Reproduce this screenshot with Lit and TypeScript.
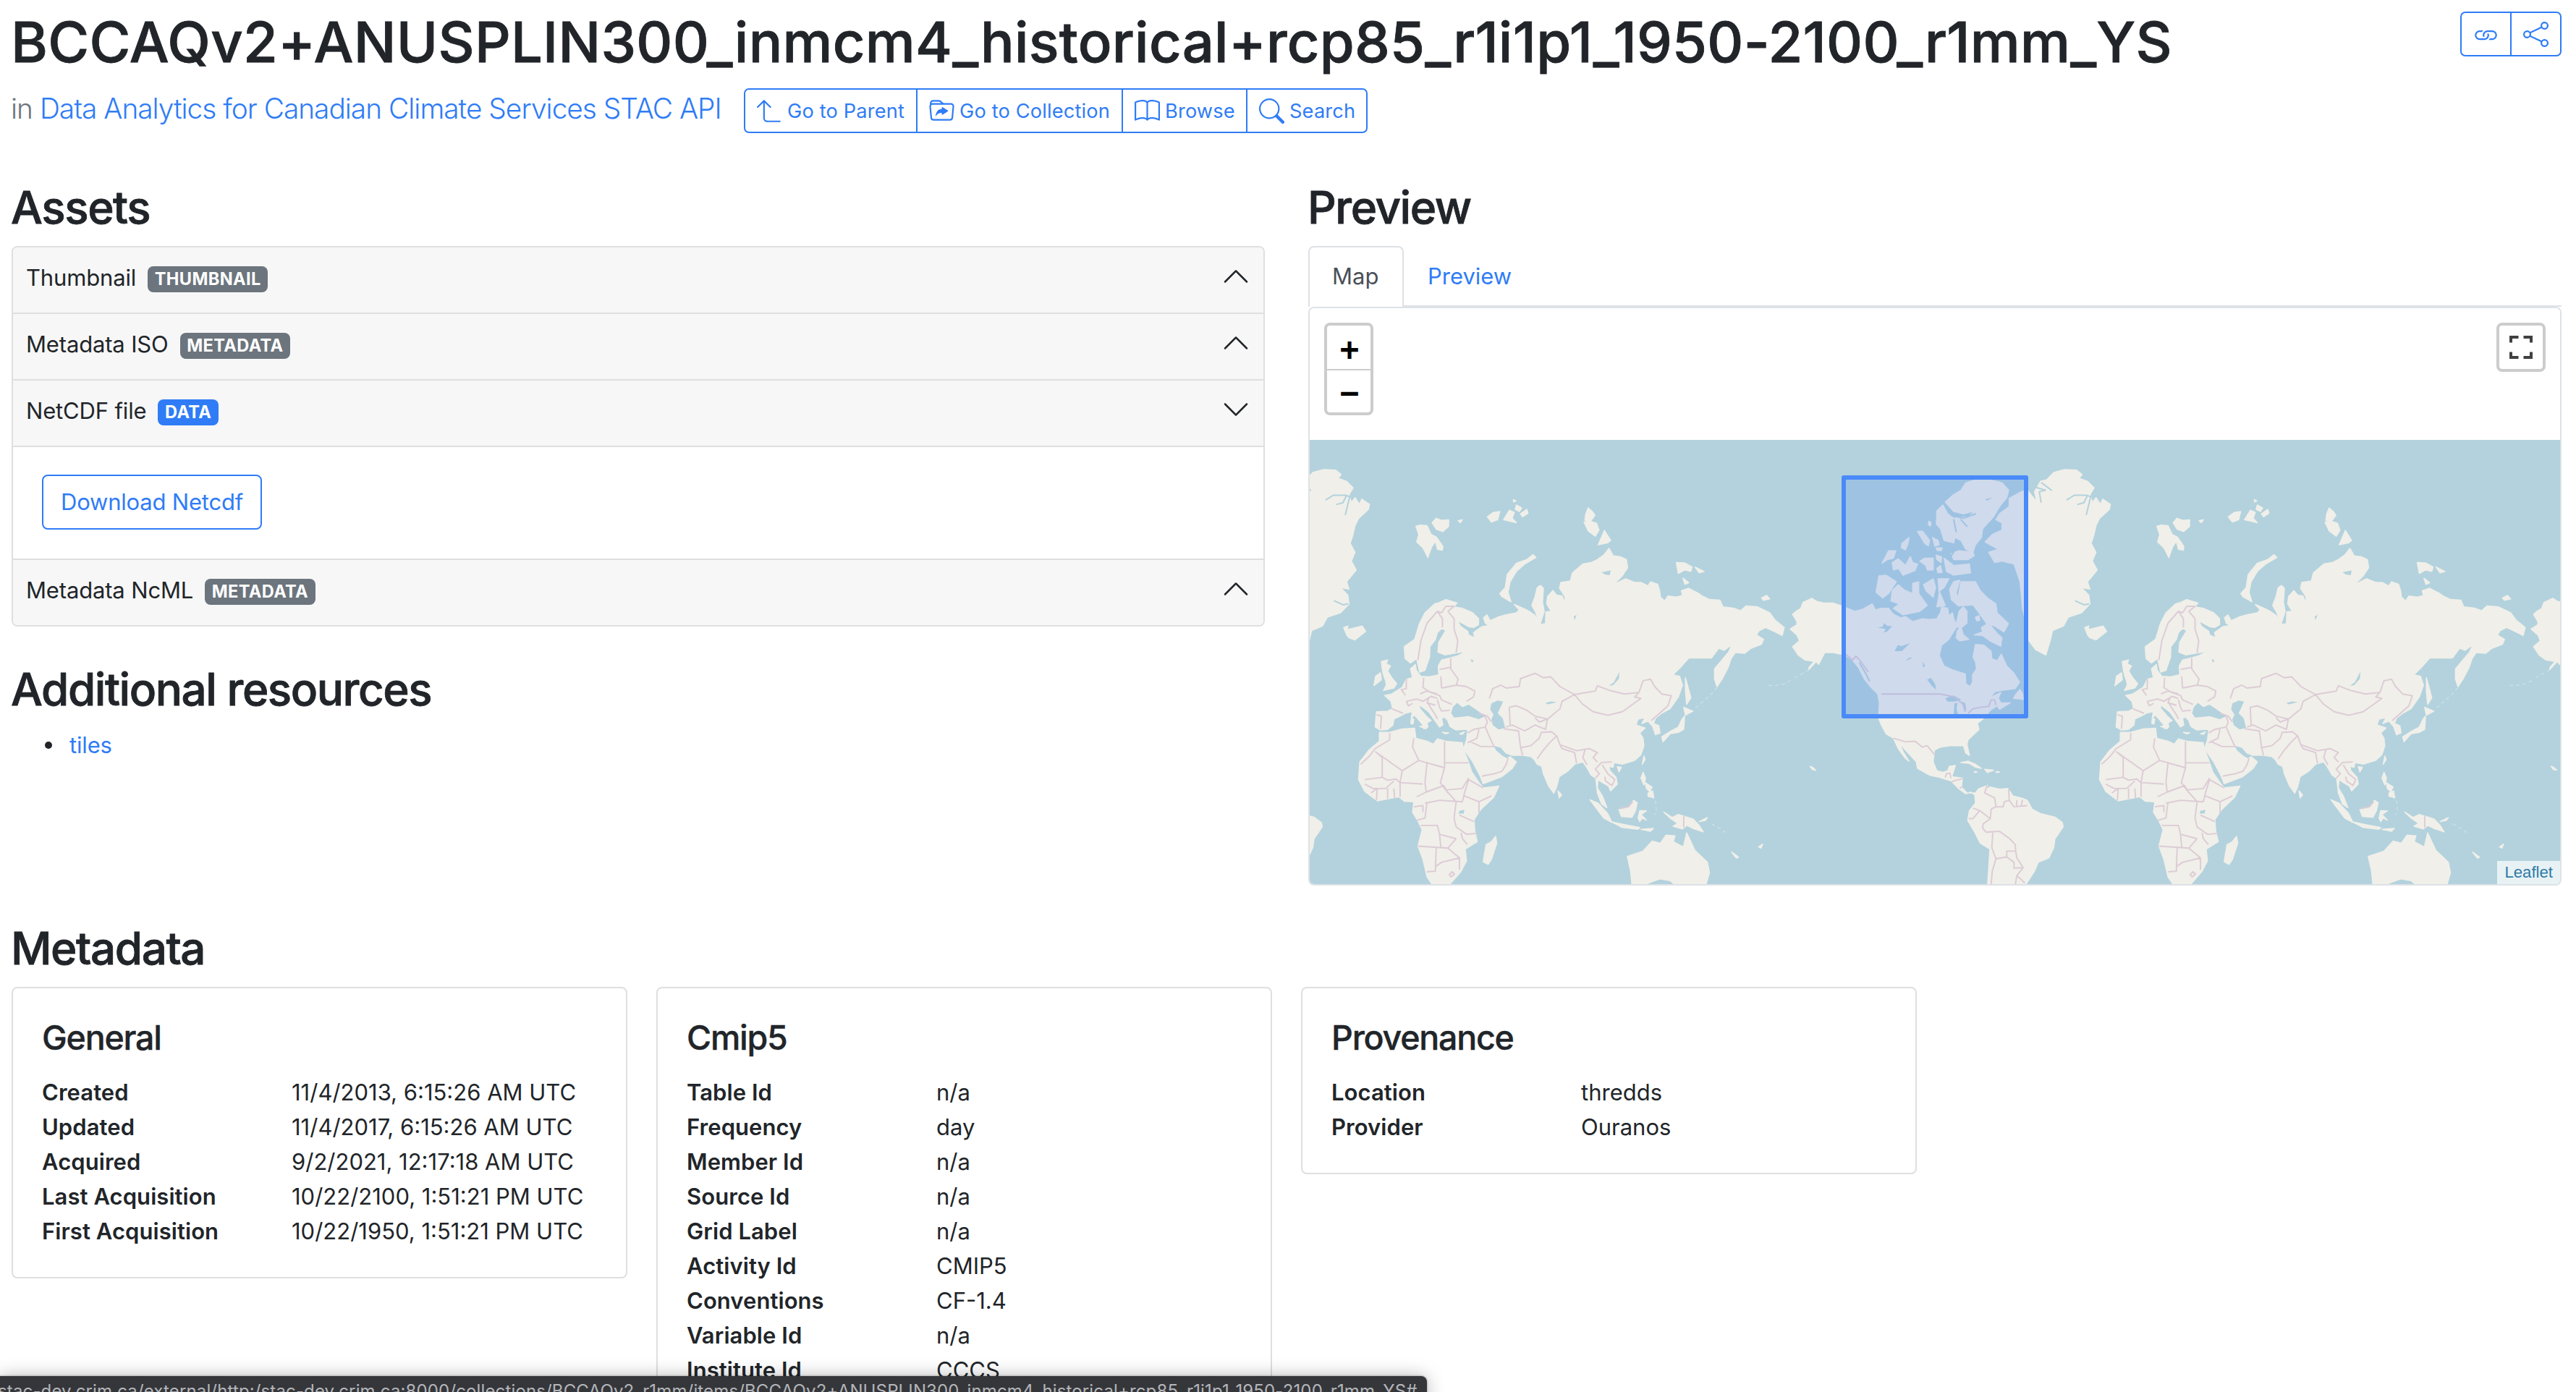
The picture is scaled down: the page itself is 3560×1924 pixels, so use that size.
import { LitElement, html, svg, css } from "lit";
import { customElement, property } from "lit/decorators.js";
import { classMap } from "lit/directives/class-map.js";

/* ---------- icons, 16 x 16 grid ---------- */

const ICONS: Record<string, string[]> = {
  parent: [
    "M4.854 1.146a.5.5 0 0 0-.708 0l-4 4a.5.5 0 1 0 .708.708L4 2.707V12.5A2.5 2.5 0 0 0 6.5 15h8a.5.5 0 0 0 0-1h-8A1.5 1.5 0 0 1 5 12.5V2.707l3.146 3.147a.5.5 0 1 0 .708-.708l-4-4z",
  ],
  collection: [
    "m11.798 8.271-3.182 1.97c-.27.166-.616-.036-.616-.372V9.1s-2.571-.3-4 2.4c.571-4.8 3.143-4.8 4-4.8v-.769c0-.336.346-.538.616-.371l3.182 1.969c.27.166.27.576 0 .742z",
    "m.5 3 .04.87a2 2 0 0 0-.342 1.311l.637 7A2 2 0 0 0 2.826 14h10.348a2 2 0 0 0 1.991-1.819l.637-7A2 2 0 0 0 13.81 3H9.828a2 2 0 0 1-1.414-.586l-.828-.828A2 2 0 0 0 6.172 1H2.5a2 2 0 0 0-2 2zm.694 2.09A1 1 0 0 1 2.19 4h11.62a1 1 0 0 1 .996 1.09l-.636 7a1 1 0 0 1-.996.91H2.826a1 1 0 0 1-.995-.91l-.637-7zM6.172 2a1 1 0 0 1 .707.293L7.586 3H2.19c-.24 0-.47.042-.683.12L1.5 2.98a1 1 0 0 1 1-.98h3.672z",
  ],
  browse: [
    "M1 2.828c.885-.37 2.154-.769 3.388-.893 1.33-.134 2.458.063 3.112.752v9.746c-.935-.53-2.12-.603-3.213-.493-1.18.12-2.37.461-3.287.811V2.828zm7.5-.141c.654-.689 1.782-.886 3.112-.752 1.234.124 2.503.523 3.388.893v9.923c-.918-.35-2.107-.692-3.287-.81-1.094-.111-2.278-.039-3.213.492V2.687zM8 1.783C7.015.936 5.587.81 4.287.94c-1.514.153-3.042.672-3.994 1.105A.5.5 0 0 0 0 2.5v11a.5.5 0 0 0 .707.455c.882-.4 2.303-.881 3.68-1.02 1.409-.142 2.59.087 3.223.877a.5.5 0 0 0 .78 0c.633-.79 1.814-1.019 3.222-.877 1.378.139 2.8.62 3.681 1.02A.5.5 0 0 0 16 13.5v-11a.5.5 0 0 0-.293-.455c-.952-.433-2.48-.952-3.994-1.105C10.413.809 8.985.936 8 1.783z",
  ],
  search: [
    "M11.742 10.344a6.5 6.5 0 1 0-1.397 1.398h-.001c.03.04.062.078.098.115l3.85 3.85a1 1 0 0 0 1.415-1.414l-3.85-3.85a1.007 1.007 0 0 0-.115-.1zM12 6.5a5.5 5.5 0 1 1-11 0 5.5 5.5 0 0 1 11 0z",
  ],
  link: [
    "M6.354 5.5H4a3 3 0 0 0 0 6h3a3 3 0 0 0 2.83-4H9c-.086 0-.17.01-.25.031A2 2 0 0 1 7 10.5H4a2 2 0 1 1 0-4h1.535c.218-.376.495-.714.82-1z",
    "M9 5.5a3 3 0 0 0-2.83 4h1.098A2 2 0 0 1 9 6.5h3a2 2 0 1 1 0 4h-1.535a4.02 4.02 0 0 1-.82 1H12a3 3 0 1 0 0-6H9z",
  ],
  share: [
    "M13.5 1a1.5 1.5 0 1 0 0 3 1.5 1.5 0 0 0 0-3zM11 2.5a2.5 2.5 0 1 1 .603 1.628l-6.718 3.12a2.499 2.499 0 0 1 0 1.504l6.718 3.12a2.5 2.5 0 1 1-.488.876l-6.718-3.12a2.5 2.5 0 1 1 0-3.256l6.718-3.12A2.5 2.5 0 0 1 11 2.5zm-8.5 4a1.5 1.5 0 1 0 0 3 1.5 1.5 0 0 0 0-3zm11 5.5a1.5 1.5 0 1 0 0 3 1.5 1.5 0 0 0 0-3z",
  ],
  up: [
    "M7.646 4.646a.5.5 0 0 1 .708 0l6 6a.5.5 0 0 1-.708.708L8 5.707l-5.646 5.647a.5.5 0 0 1-.708-.708l6-6z",
  ],
  down: [
    "M1.646 4.646a.5.5 0 0 1 .708 0L8 10.293l5.646-5.647a.5.5 0 0 1 .708.708l-6 6a.5.5 0 0 1-.708 0l-6-6a.5.5 0 0 1 0-.708z",
  ],
};

const icon = (name: string, cls = "icon") =>
  html`<svg class=${cls} viewBox="0 0 16 16" fill="currentColor">
    ${ICONS[name].map((d) => svg`<path d=${d}></path>`)}
  </svg>`;

/* ---------- world map shapes ---------- */

/* Europe, Asia, Africa and Oceania. */
const EAST_LAND = [
  "318,575 330,570 345,560 358,566 372,572 364,585 385,590 410,605 424,625 424,645 412,655 400,652 385,640 374,632 380,650 398,668 400,680 415,690 412,672 432,652 448,648 440,640 436,622 444,612 452,632 470,620 490,612 515,605 522,595 510,577 535,592 548,602 560,614 570,640 562,605 552,580 560,550 565,520 573,512 580,522 578,570 582,600 572,645 585,642 586,602 596,600 603,628 598,598 588,575 590,550 603,530 612,545 625,548 633,575 632,550 619,522 622,502 645,497 650,470 675,440 695,435 710,425 725,410 738,387 748,412 765,415 780,425 783,452 770,480 748,510 778,490 800,502 815,502 832,514 838,500 855,508 860,530 862,552 872,565 880,548 900,552 915,547 912,530 930,522 952,538 962,548 980,560 1005,562 1012,585 1040,590 1055,598 1068,582 1095,585 1125,605 1138,630 1160,655 1155,682 1135,668 1115,655 1100,665 1093,680 1110,695 1105,712 1080,725 1065,742 1042,740 1032,760 1025,790 1010,830 998,855 992,830 992,795 1010,765 1025,740 1035,712 1015,732 1002,725 985,758 930,758 910,790 892,815 908,820 915,850 905,890 885,930 865,945 850,962 845,980 858,987 861,1012 850,1018 843,990 832,972 817,980 825,960 808,965 803,985 825,995 812,1012 820,1030 822,1055 815,1085 800,1105 770,1118 750,1112 748,1128 738,1125 740,1140 755,1162 758,1185 742,1208 737,1192 722,1180 712,1170 710,1198 722,1225 733,1265 720,1252 710,1215 706,1165 695,1155 685,1130 675,1110 655,1118 640,1140 618,1160 612,1195 605,1216 592,1190 580,1150 576,1125 565,1118 558,1102 550,1092 530,1088 505,1088 490,1080 478,1060 458,1053 465,1072 482,1092 492,1100 500,1092 515,1110 505,1132 480,1160 435,1184 428,1158 410,1110 388,1065 395,1035 398,1000 385,1000 370,1002 355,990 350,970 342,958 335,962 338,985 330,992 318,968 305,942 290,925 280,915 283,930 298,955 310,970 300,978 302,992 292,998 290,985 275,960 262,940 248,945 235,955 220,965 218,985 205,1000 188,1002 175,992 178,940 205,938 217,930 213,905 198,885 215,880 228,868 240,858 250,830 265,825 260,795 272,780 274,800 285,820 305,822 328,815 327,785 335,765 355,758 375,750 395,735 375,740 343,748 326,738 328,705 345,665 335,658 325,672 320,695 307,720 306,755 295,800 282,806 275,760 260,775 247,760 245,720 270,695 282,640 295,605",
  "185,1010 210,1010 240,998 270,996 273,1030 300,1040 315,1050 325,1032 345,1040 385,1045 387,1065 397,1100 408,1145 425,1180 435,1198 473,1192 460,1230 430,1270 413,1305 415,1345 421,1380 392,1405 395,1445 382,1480 355,1524 312,1524 300,1500 290,1440 278,1395 288,1340 278,1310 265,1280 268,1245 245,1243 232,1228 180,1242 150,1210 135,1170 138,1110 160,1070 185,1040",
  "465,1362 468,1385 455,1440 447,1457 435,1448 442,1390 455,1380",
  "782,1430 820,1412 842,1378 862,1385 875,1358 897,1360 893,1380 917,1398 925,1350 935,1380 945,1410 975,1450 980,1485 972,1524 895,1524 885,1512 860,1506 830,1522 793,1524 790,1480",
  "762,1272 785,1265 797,1240 806,1248 802,1275 793,1298 768,1295",
  "692,1238 712,1250 735,1285 745,1315 725,1300 708,1268",
  "745,1313 775,1322 812,1332 808,1338 770,1332",
  "815,1338 845,1335 838,1345",
  "812,1275 828,1276 815,1288 828,1307 818,1300 812,1312 808,1300",
  "870,1280 890,1298 905,1288 940,1303 955,1325 965,1347 940,1335 925,1325 915,1337 892,1328 903,1318 885,1300",
  "955,1312 975,1298 970,1308",
  "820,1145 826,1165 822,1188 815,1165",
  "825,1180 842,1195 836,1210 828,1200",
  "832,1215 843,1208 846,1232 832,1226",
  "615,1208 624,1222 618,1232",
  "822,1090 825,1102 818,1118",
  "758,1126 768,1128 762,1144",
  "920,955 918,1000 905,1010 885,1015 868,1042 865,1025 888,1005 905,992 914,965",
  "918,925 940,938 922,952",
  "922,825 930,865 935,893 925,915 922,870",
  "555,408 562,418 535,440 515,465 500,500 495,535 502,568 480,550 475,540 488,520 493,475 515,437 540,425",
  "273,312 283,308 300,310 310,340 322,348 338,380 337,393 325,390 320,362 310,385 302,418 290,385 275,365 280,340",
  "312,300 322,285 335,292 352,290 352,312 338,330 322,322",
  "445,280 460,265 475,262 470,290 455,298",
  "484,290 498,258 510,265 505,285 515,300",
  "515,240 528,250 522,262 512,255",
  "525,270 540,255 543,268 530,280",
  "508,222 514,226 508,230",
  "375,293 385,290 380,300",
  "688,250 698,262 704,275 695,292 680,292 682,270",
  "678,298 690,294 708,302 714,325 705,346 688,328",
  "727,326 742,360 735,368 712,375",
  "900,435 920,436 938,450 935,465 920,460 905,472",
  "945,450 967,465 955,470",
  "916,488 930,503 921,509",
  "1105,555 1117,546 1125,558 1110,563",
  "190,770 205,765 202,778 212,785 205,802 215,825 227,845 220,860 195,868 202,850 200,835 195,815 192,795",
  "176,820 188,808 190,832 172,852",
  "264,945 267,955 262,960",
  "262,962 268,965 266,982 261,980",
  "282,990 300,984 298,998",
  "337,1010 352,1012 345,1015",
  "378,1015 390,1008 385,1017",
  "1222,1125 1228,1128 1236,1138 1228,1136",
  "1033,1415 1050,1432 1045,1436",
  "1098,1398 1108,1388 1104,1402",
];

/* North and South America with Greenland. */
const WEST_LAND = [
  "-68,610 -50,598 -34,590 -25,570 12,556 30,566 60,572 100,572 136,582 190,600 225,592 262,575 275,595 300,590 330,590 350,610 380,622 400,618 430,635 470,625 500,628 530,625 545,605 550,585 575,590 580,615 595,605 602,630 615,650 600,668 580,695 550,715 540,750 560,785 600,800 648,812 650,845 668,855 678,840 678,815 695,795 690,770 680,755 690,712 725,715 755,735 758,760 780,768 797,745 820,785 850,810 873,840 855,862 800,868 770,872 750,895 770,885 795,875 785,895 795,910 835,910 790,932 780,920 752,935 720,965 698,980 705,1000 660,1035 655,1050 665,1088 650,1080 640,1055 585,1055 545,1060 520,1070 515,1110 530,1140 555,1145 575,1140 582,1125 607,1122 600,1140 592,1160 636,1165 632,1195 655,1215 690,1215 688,1222 670,1212 650,1218 620,1200 590,1175 540,1162 500,1155 450,1132 445,1110 400,1070 375,1045 390,1075 415,1108 400,1098 370,1065 350,1030 320,1015 300,985 288,960 292,910 285,880 260,860 230,830 205,790 180,765 150,748 100,740 65,740 40,780 30,770 0,797 0,790 22,770 -16,765 -45,748 -68,720 -40,700 -50,680 -78,660 -50,645 -50,635",
  "688,1225 690,1215 705,1200 740,1190 735,1205 750,1195 790,1202 825,1200 845,1225 880,1232 905,1240 925,1270 960,1285 1020,1297 1050,1315 1054,1330 1020,1370 1015,1400 995,1435 950,1450 935,1480 895,1530 740,1530 745,1470 750,1405 710,1385 685,1345 658,1308 665,1275 690,1250",
  "630,1112 660,1107 690,1118 715,1132 690,1128 665,1115",
  "728,1135 765,1138 740,1146",
  "685,1143 697,1144 690,1146",
  "775,1143 790,1144 780,1146",
  "875,865 885,878 888,898 848,895 860,878",
  "1015,130 1060,120 1110,122 1132,137 1120,150 1155,160 1182,182 1165,205 1175,232 1190,215 1208,238 1218,220 1250,238 1245,255 1205,285 1190,310 1180,345 1170,370 1190,400 1175,430 1195,460 1175,480 1155,500 1165,525 1130,520 1160,545 1165,575 1130,605 1075,620 1055,650 1010,665 1000,700 982,748 940,730 912,700 900,640 885,590 880,540 875,500 850,440 800,430 770,435 745,400 785,390 730,365 760,340 800,325 800,300 775,290 790,270 830,245 830,218 880,195 905,190 930,215 945,230 935,195 960,160 985,155",
  "565,230 600,205 630,190 650,165 690,155 750,155 800,165 828,190 820,215 790,245 765,280 720,320 715,350 690,375 680,400 650,390 630,360 605,350 600,368 560,360 545,320 528,305 530,260 555,240 575,270 600,285 660,280 690,260 640,270 600,262",
  "590,405 620,395 680,400 685,412 660,425 600,425",
  "560,420 600,445 665,440 670,470 600,478 570,465",
  "600,500 625,495 610,540 618,552 630,500 690,500 710,530 740,555 775,575 780,605 827,642 808,670 770,650 735,640 700,600 680,578 620,582 590,560 583,525",
  "685,680 720,670 715,655 745,640 780,675 800,690 795,718 750,700 720,682",
  "615,665 632,658 640,680 662,695 625,700 610,690",
  "622,600 640,585 655,600 655,640 625,660 610,645",
  "690,620 705,615 708,630 695,632",
  "345,530 370,510 395,528 430,540 430,505 455,500 455,540 490,580 460,600 390,612 350,590 375,575 340,565",
  "290,480 320,478 362,500 330,540 305,555 278,535",
  "475,510 515,490 525,520 515,552 485,530",
  "535,490 580,490 560,520 540,532 565,580 530,585 540,540",
  "345,435 370,422 400,445 420,415 430,435 450,440 440,462 390,478 372,455 350,460",
  "303,437 330,395 360,395 350,420 325,425",
  "450,330 470,328 500,360 495,378 480,370",
  "385,370 415,350 410,372 400,392 383,385",
  "460,430 480,420 515,420 515,460 490,460 485,445",
  "527,410 550,415 548,435 530,425",
  "530,455 545,445 552,468 535,470",
  "512,350 535,360 540,375 522,380",
  "497,295 506,300 503,312 495,306",
  "528,385 552,385 548,395 530,393",
  "1143,655 1160,650 1158,662 1180,658 1220,650 1234,668 1190,697 1165,690 1155,680",
];

/* Aleutian chain, Kurils and small Pacific islands, drawn as faint strokes. */
const WEST_CHAINS = ["0,797 -30,812 -58,825", "-75,835 -110,848 -150,852 -175,850"];
const EAST_CHAINS = ["998,858 985,880 965,905 942,932", "748,1318 780,1328 812,1336", "985,1320 1005,1335 1020,1350", "850,1240 852,1275 848,1290"];

const EAST_WATER = [
  "362,925 372,910 385,925 400,916 415,930 425,940 440,955 425,965 400,955 365,960 358,945",
  "455,912 470,902 483,906 475,930 470,945 482,962 488,995 472,1000 458,985 455,965 460,950 452,932",
  "738,852 750,840 763,805 762,828 748,850",
  "378,1276 390,1272 388,1285 376,1285",
  "720,468 742,462 740,478 728,475",
  "585,910 600,905 612,908 590,915",
  "405,762 412,766 408,774",
  "653,618 660,612 655,630",
];

const WEST_WATER = [
  "285,655 305,652 312,640 325,650 345,650 325,668 310,672 318,660",
  "355,735 368,715 385,718 418,708 385,735",
  "402,768 412,758 432,756",
  "490,832 505,825 522,845 528,865 512,855",
  "470,770 482,785 474,790",
  "565,895 600,885 632,900 600,906 575,906",
  "603,912 615,910 612,930 618,948 600,950",
  "632,905 648,912 652,935 645,940",
  "728,222 760,215 740,225",
  "680,700 686,702 680,706",
];

/* Fjords cut into the coast of Greenland and Ellesmere. */
const WEST_FJORDS = [
  "1070,222 1100,207 1150,207 1168,212 1150,272",
  "1115,238 1140,232 1152,212",
  "940,180 980,190 955,195 962,230",
  "590,275 640,285 690,270",
  "600,290 610,330",
  "630,290 655,312",
  "965,165 1005,190",
  "1105,565 1140,578 1160,575",
  "210,775 235,810 250,835",
  "545,410 585,418 600,400",
];

const EAST_BORDERS = [
  "278,765 285,700 300,640 325,600 335,605 345,583 365,583 350,600",
  "325,600 337,625 337,655",
  "350,600 365,625 365,660 374,700 370,740",
  "450,895 458,862 478,850 490,860 522,855 525,828 560,810 580,825 598,822 620,855 655,882 625,905 620,930 590,965 560,955 540,935 515,920 498,925 500,985",
  "655,882 705,870 710,852 740,868 775,880 810,875 800,890 815,895 770,940 735,952 700,940 675,915 655,882",
  "810,875 820,835 838,830 848,855 865,880 888,886 880,920 860,945 840,970",
  "490,992 505,985 535,1005 560,985 585,1000 590,965 570,975 560,960",
  "485,998 520,1005 525,1060 530,1088",
  "525,1062 550,1055 570,1030 575,1010 600,1008 612,1022 595,1045 580,1070 565,1100",
  "612,1022 620,1052 660,1072 690,1065 710,1078 700,1095 710,1110",
  "620,1052 625,1065 655,1078 660,1115",
  "680,1070 675,1095 685,1120",
  "705,1165 715,1150 705,1135 720,1112 745,1110",
  "722,1120 735,1150 752,1170 745,1190 730,1175 728,1160",
  "330,797 355,790",
  "357,758 357,795 375,830 370,850",
  "292,825 290,858 305,872 325,880",
  "333,820 335,860",
  "335,860 370,850 395,855 415,870 412,890 395,905",
  "250,828 250,862 238,865 248,885",
  "250,905 275,897 290,905 310,888 325,895",
  "250,905 255,920 265,912",
  "215,930 242,945",
  "178,950 190,955 188,998",
  "283,880 300,870 330,885 335,900 360,915",
  "300,905 310,930 320,950 325,965",
  "325,900 330,925 335,938 355,935",
  "305,890 300,910 320,918",
  "398,1012 412,1000 440,992",
  "425,1000 420,1030 398,1045",
  "438,950 445,975 440,992 455,1040 462,1060",
  "405,1042 430,1058 460,1058",
  "425,945 445,955 455,975",
  "432,1158 462,1150 480,1142 490,1120 495,1098",
  "210,1012 210,1035 175,1065 160,1092 140,1118",
  "175,1075 240,1140 280,1105 265,1060 268,1030",
  "178,1078 192,1095 192,1162 150,1170",
  "280,1105 342,1130 342,1040",
  "342,1113 400,1113",
  "342,1130 332,1180 345,1205 385,1200 400,1165",
  "300,1110 295,1180 298,1212 275,1228",
  "240,1140 235,1180 290,1185",
  "235,1180 235,1228",
  "192,1162 205,1172 225,1168 235,1180",
  "150,1185 170,1200 200,1200 220,1175",
  "205,1200 205,1235",
  "220,1200 222,1235",
  "165,1215 180,1200 178,1240",
  "298,1212 340,1190 350,1215",
  "295,1250 330,1240 385,1245",
  "345,1205 370,1245 365,1300 370,1330 395,1355 420,1352",
  "385,1245 390,1215 400,1170 435,1198",
  "390,1225 425,1245 455,1225",
  "425,1245 425,1285",
  "378,1290 413,1312",
  "275,1308 295,1300 300,1245",
  "268,1262 290,1258 290,1280",
  "285,1325 325,1325 330,1355 370,1370",
  "278,1395 350,1402 370,1370",
  "330,1355 333,1398",
  "322,1400 320,1480 300,1482",
  "350,1402 378,1435 335,1450 320,1465",
  "378,1435 378,1475",
  "382,1350 385,1370 397,1390",
  "353,1492 360,1482 366,1490 358,1499 353,1492",
  "765,1268 785,1262 795,1245",
  "918,1293 918,1332",
];

const WEST_BORDERS = [
  "300,880 545,880 600,890 640,915 648,940",
  "660,945 680,930 710,925 745,922 755,900 770,900 775,918",
  "152,745 180,765 195,752 215,770 245,805",
  "350,1030 400,1042 440,1040 470,1060 490,1055 520,1085",
  "565,1162 570,1150 585,1148 588,1165",
  "590,1178 610,1172 636,1167",
  "625,1198 635,1195",
  "738,1190 728,1215 770,1232 775,1262 755,1270 752,1302",
  "680,1267 708,1275 752,1302 722,1320 720,1335 735,1348 790,1345 832,1370 855,1390 857,1412 820,1412 820,1430",
  "708,1275 680,1302 662,1302",
  "762,1350 758,1400 775,1438 760,1480 755,1525",
  "775,1438 820,1432 850,1450 850,1470 888,1468",
  "857,1412 862,1435 888,1468 862,1495 895,1520",
  "828,1202 830,1240 810,1245 805,1262 775,1262",
  "830,1240 850,1262 905,1258",
  "862,1240 860,1260",
  "885,1238 880,1258",
  "862,1495 855,1525",
];

const toPath = (shapes: string[], close: boolean) =>
  shapes.map((points) => "M" + points.split(" ").join("L") + (close ? "Z" : "")).join("");

const PATHS = {
  eastLand: toPath(EAST_LAND, true),
  eastChains: toPath(EAST_CHAINS, false),
  eastWater: toPath(EAST_WATER, true),
  eastBorders: toPath(EAST_BORDERS, false),
  westLand: toPath(WEST_LAND, true),
  westChains: toPath(WEST_CHAINS, false),
  westWater: toPath(WEST_WATER, true),
  westFjords: toPath(WEST_FJORDS, false),
  westBorders: toPath(WEST_BORDERS, false),
};

/* One world is 1024 units wide at this zoom level. */
const WORLD = 1024;

@customElement("leaflet-map")
export class LeafletMap extends LitElement {
  static styles = css`
    :host { display: block; position: relative; overflow: hidden; height: 796px; padding-top: 182px; box-sizing: border-box; background: #fff; }
    .tiles { display: block; width: 1728px; height: 614px; }
    .sea { fill: #b3d2dd; }
    .land { fill: #f0efe9; stroke: #f0efe9; stroke-width: 1.5; stroke-linejoin: round; }
    .chain { fill: none; stroke: #f0efe9; stroke-width: 1.3; stroke-opacity: 0.45; stroke-dasharray: 5 4; }
    .water { fill: #b3d2dd; }
    .fjord { fill: none; stroke: #b3d2dd; stroke-width: 2; stroke-linecap: round; stroke-linejoin: round; }
    .border { fill: none; stroke: #dccbd6; stroke-width: 1.9; stroke-linejoin: round; }
    .bbox { fill: #4a87fb; fill-opacity: 0.2; stroke: #4a8af8; stroke-width: 6; stroke-linejoin: round; }
    .thin { vector-effect: non-scaling-stroke; }
    .control { position: absolute; box-sizing: border-box; border: 4px solid #ccc; border-radius: 8px; background: #fff; display: flex; flex-direction: column; }
    .zoom { left: 20px; top: 20px; width: 68px; height: 128px; }
    .zoom button { all: unset; box-sizing: border-box; height: 60px; display: flex; align-items: center; justify-content: center; padding: 5px 0 0 2px; font: 700 44px/54px "DejaVu Sans Mono", monospace; color: #000; }
    .zoom button + button { border-top: 2px solid #ccc; padding-top: 3px; }
    .full { right: 20px; top: 20px; width: 68px; height: 68px; align-items: center; justify-content: center; }
    .full svg { width: 32px; height: 32px; fill: none; stroke: #404040; stroke-width: 4; }
    .credit { position: absolute; right: 0; bottom: 0; height: 32px; padding: 0 10px; background: rgba(255, 255, 255, 0.7); font: 22.2px/32px "Liberation Sans", sans-serif; color: #2f7ba6; }
  `;

  private world(offset: number) {
    return svg`<g transform="translate(${offset} 0)">
      <g transform="translate(-10 -8) scale(0.574 0.4082)">
        <path class="land thin" d=${PATHS.eastLand}></path>
        <path class="chain thin" d=${PATHS.eastChains}></path>
        <path class="water" d=${PATHS.eastWater}></path>
        <path class="border thin" d=${PATHS.eastBorders}></path>
      </g>
      <g transform="translate(690 -8) scale(0.33333 0.4082)">
        <path class="land thin" d=${PATHS.westLand}></path>
        <path class="chain thin" d=${PATHS.westChains}></path>
        <path class="water" d=${PATHS.westWater}></path>
        <path class="fjord thin" d=${PATHS.westFjords}></path>
        <path class="border thin" d=${PATHS.westBorders}></path>
      </g>
    </g>`;
  }

  render() {
    return html`
      <svg class="tiles" viewBox="0 0 1728 614">
        <rect class="sea" width="1728" height="614"></rect>
        ${[-WORLD, 0, WORLD].map((offset) => this.world(offset))}
        <rect class="bbox" x="738" y="52" width="252" height="330"></rect>
      </svg>
      <div class="control zoom"><button>+</button><button>−</button></div>
      <div class="control full">
        <svg viewBox="0 0 32 32"><path d="M2 9.500V2H12.500M19.500 2H30V9.500M30 22.500V30H19.500M12.500 30H2V22.500"></path></svg>
      </div>
      <div class="credit">Leaflet</div>
    `;
  }
}

@customElement("metadata-card")
export class MetadataCard extends LitElement {
  static styles = css`
    :host { display: block; box-sizing: border-box; border: 2px solid #dfdfdf; border-radius: 8px; padding: 40px 40px 39px; background: #fff; }
    .title { margin: 0 0 23px; font-size: 46.5px; font-weight: 500; -webkit-text-stroke: 0.4px #212529; line-height: 57px; letter-spacing: -0.026em; }
    .row { display: grid; grid-template-columns: 345px 1fr; font-size: 31px; line-height: 48px; white-space: nowrap; }
    .key { font-weight: 600; letter-spacing: 0.002em; }
  `;
  @property() heading = "";
  @property({ attribute: false }) rows: [string, string][] = [];

  render() {
    return html`<h4 class="title">${this.heading}</h4>
      ${this.rows.map(([key, value]) => html`<div class="row"><span class="key">${key}</span><span>${value}</span></div>`)}`;
  }
}

interface Asset { name: string; role: string; open?: boolean }

const ASSETS: Asset[] = [
  { name: "Thumbnail", role: "THUMBNAIL" },
  { name: "Metadata ISO", role: "METADATA" },
  { name: "NetCDF file", role: "DATA", open: true },
  { name: "Metadata NcML", role: "METADATA" },
];

const METADATA: { heading: string; rows: [string, string][] }[] = [
  {
    heading: "General",
    rows: [
      ["Created", "11/4/2013, 6:15:26 AM UTC"],
      ["Updated", "11/4/2017, 6:15:26 AM UTC"],
      ["Acquired", "9/2/2021, 12:17:18 AM UTC"],
      ["Last Acquisition", "10/22/2100, 1:51:21 PM UTC"],
      ["First Acquisition", "10/22/1950, 1:51:21 PM UTC"],
    ],
  },
  {
    heading: "Cmip5",
    rows: [
      ["Table Id", "n/a"],
      ["Frequency", "day"],
      ["Member Id", "n/a"],
      ["Source Id", "n/a"],
      ["Grid Label", "n/a"],
      ["Activity Id", "CMIP5"],
      ["Conventions", "CF-1.4"],
      ["Variable Id", "n/a"],
      ["Institute Id", "CCCS"],
    ],
  },
  { heading: "Provenance", rows: [["Location", "thredds"], ["Provider", "Ouranos"]] },
];

@customElement("app-root")
export class AppRoot extends LitElement {
  static styles = css`
    :host { display: block; position: relative; box-sizing: border-box; width: 3560px; height: 1924px; overflow: hidden; padding: 10px 20px 0 16px; background: #fff; color: #212529; font-family: Inter, "Liberation Sans", sans-serif; font-size: 31px; line-height: 48px; }
    a { color: #2f7cf6; text-decoration: none; }
    h1, h2 { margin: 0; font-weight: 500; -webkit-text-stroke: 0.8px #212529; white-space: nowrap; }
    h1 { font-size: 77.6px; line-height: 96px; letter-spacing: 0.0034em; text-indent: -1px; }
    h2 { font-size: 62px; line-height: 76px; letter-spacing: -0.0235em; text-indent: -1px; margin-bottom: 15px; }
    .header { display: flex; justify-content: space-between; align-items: flex-start; height: 174px; }
    .subtitle { display: flex; align-items: flex-start; margin-top: 16px; }
    .lead { font-size: 38.8px; font-weight: 300; line-height: 56px; letter-spacing: -0.0252em; color: #6c757d; white-space: nowrap; width: 1012px; text-indent: -1px; }
    .group { display: flex; height: 62px; box-sizing: border-box; border: 2px solid #2f7cf6; border-radius: 7px; color: #2f7cf6; }
    .nav { display: grid; grid-template-columns: 236px 284px 172px 166px; }
    .btn { display: flex; align-items: center; padding-left: 16px; font-size: 27.2px; letter-spacing: 0.006em; line-height: 34px; white-space: nowrap; box-sizing: border-box; }
    .btn + .btn { border-left: 2px solid #2f7cf6; }
    .label { padding: 2px 0 0 7px; }
    .icon { width: 35px; height: 35px; flex: none; }
    .tools { margin-top: 6px; }
    .tools .btn { padding-right: 16px; }
    .columns { display: grid; grid-template-columns: 1732px 1732px; gap: 60px; margin-top: 65px; height: 1024px; }
    .accordion { border: 2px solid #dfdfdf; border-radius: 8px; overflow: hidden; margin-bottom: 49px; }
    .asset { display: flex; align-items: flex-start; height: 90px; box-sizing: border-box; padding: 18px 0 0 18px; background: #f7f7f7; letter-spacing: -0.005em; }
    .asset:not(:first-child) { border-top: 2px solid #dfdfdf; height: 92px; }
    .badge { height: 36px; margin: 8px 0 0 16px; padding: 0 9.6px; border-radius: 8px; background: #6c757d; color: #fff; font-size: 23.6px; font-weight: 700; line-height: 36px; letter-spacing: 0.015em; }
    .badge.data { background: #2f7cf6; }
    .chevron { width: 40px; height: 40px; margin: 2px 18px 0 auto; }
    .panel { height: 156px; box-sizing: border-box; border-top: 2px solid #dfdfdf; padding: 38px 40px; }
    .download { width: 304px; height: 76px; box-sizing: border-box; border: 2px solid #2f7cf6; border-radius: 8px; color: #2f7cf6; display: flex; align-items: center; justify-content: center; letter-spacing: -0.0066em; }
    .links { list-style: none; margin: 0; padding: 0 0 0 46px; }
    .links li { display: flex; align-items: center; gap: 24px; letter-spacing: -0.005em; }
    .dot { width: 10px; height: 10px; border-radius: 50%; background: #212529; }
    .tabs { display: flex; height: 84px; box-sizing: border-box; border-bottom: 2px solid #dee2e6; }
    .tab { height: 84px; box-sizing: border-box; border: 2px solid transparent; border-bottom: 0; border-radius: 8px 8px 0 0; padding: 16px 30px 0 31px; color: #2f7cf6; letter-spacing: 0; }
    .tab.active { width: 132px; border-color: #dee2e6; background: #fff; color: #495057; }
    .map { border: 2px solid #dee2e6; border-radius: 8px; overflow: hidden; }
    .cards { display: grid; grid-template-columns: repeat(4, 851px); gap: 40px; align-items: start; }
    .tall { height: 700px; }
    .status { position: absolute; left: 0; top: 1902px; width: 1972px; height: 40px; box-sizing: border-box; padding-top: 5px; border-radius: 0 8px 0 0; background: #35363a; color: #b4b6ba; font-size: 24px; line-height: 32px; letter-spacing: 0.0058em; white-space: nowrap; text-indent: -3px; box-shadow: 0 0 24px rgba(0, 0, 0, 0.28), 0 0 0 1.500px rgba(0, 0, 0, 0.12); }
  `;

  private asset(asset: Asset) {
    return html`
      <div class="asset">
        <span>${asset.name}</span>
        <span class=${classMap({ badge: true, data: asset.role === "DATA" })}>${asset.role}</span>
        ${icon(asset.open ? "down" : "up", "chevron")}
      </div>
      ${asset.open ? html`<div class="panel"><div class="download">Download Netcdf</div></div>` : ""}
    `;
  }

  private button(name: string, label = "") {
    return html`<div class="btn">${icon(name)}${label ? html`<span class="label">${label}</span>` : ""}</div>`;
  }

  render() {
    return html`
      <header class="header">
        <div>
          <h1>BCCAQv2+ANUSPLIN300_inmcm4_historical+rcp85_r1i1p1_1950-2100_r1mm_YS</h1>
          <div class="subtitle">
            <div class="lead">in <a>Data Analytics for Canadian Climate Services STAC API</a></div>
            <div class="group nav">
              ${this.button("parent", "Go to Parent")} ${this.button("collection", "Go to Collection")}
              ${this.button("browse", "Browse")} ${this.button("search", "Search")}
            </div>
          </div>
        </div>
        <div class="group tools">${this.button("link")}${this.button("share")}</div>
      </header>
      <div class="columns">
        <section>
          <h2>Assets</h2>
          <div class="accordion">${ASSETS.map((a) => this.asset(a))}</div>
          <h2>Additional resources</h2>
          <ul class="links"><li><span class="dot"></span><a>tiles</a></li></ul>
        </section>
        <section>
          <h2>Preview</h2>
          <div class="tabs"><div class="tab active">Map</div><div class="tab">Preview</div></div>
          <div class="map"><leaflet-map></leaflet-map></div>
        </section>
      </div>
      <section>
        <h2>Metadata</h2>
        <div class="cards">
          ${METADATA.map((m) => html`<metadata-card class=${classMap({ tall: m.rows.length > 8 })} .heading=${m.heading} .rows=${m.rows}></metadata-card>`)}
        </div>
      </section>
      <div class="status">stac-dev.crim.ca/external/http:/stac-dev.crim.ca:8000/collections/BCCAQv2_r1mm/items/BCCAQv2+ANUSPLIN300_inmcm4_historical+rcp85_r1i1p1_1950-2100_r1mm_YS#</div>
    `;
  }
}
